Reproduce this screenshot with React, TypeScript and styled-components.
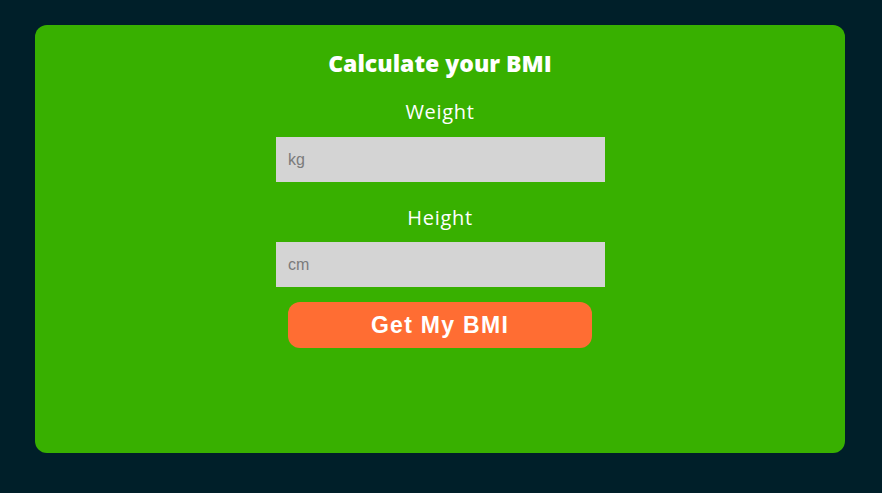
import React from "react";
import styled, { createGlobalStyle } from "styled-components";

const Global = createGlobalStyle`
  html, body { margin: 0; padding: 0; background: #001f29; }
  body { font-family: "Liberation Sans", Arial, sans-serif; }
`;

const Page = styled.div`
  width: 882px;
  height: 493px;
  box-sizing: border-box;
  padding: 25px 37px 40px 35px;
  background: #001f29;
`;

const Card = styled.div`
  height: 428px;
  box-sizing: border-box;
  background: #38b000;
  border-radius: 12px;
  padding-top: 23px;
  display: flex;
  flex-direction: column;
  align-items: center;
`;

const Title = styled.h1`
  margin: 0;
  font-family: "Open Sans", "Noto Sans", sans-serif;
  font-weight: 800;
  font-size: 23px;
  line-height: 30px;
  color: #ffffff;
`;

const Label = styled.label<{ $top: number }>`
  margin-top: ${(p) => p.$top}px;
  font-family: "Open Sans", "Noto Sans", sans-serif;
  font-size: 20px;
  letter-spacing: 0.7px;
  line-height: 28px;
  color: #ffffff;
`;

const Input = styled.input<{ $top: number }>`
  margin-top: ${(p) => p.$top}px;
  width: 329px;
  height: 45px;
  box-sizing: border-box;
  border: none;
  background: #d4d4d4;
  padding: 0 12px;
  font-family: "Liberation Sans", Arial, sans-serif;
  font-size: 16px;
  color: #333;
  outline: none;
  margin-left: 1px;
  &::placeholder { color: #7b7b7b; }
`;

const Button = styled.button`
  margin-top: 15px;
  width: 304px;
  height: 46px;
  border: none;
  border-radius: 12px;
  background: #ff6d33;
  color: #ffffff;
  font-family: "Liberation Sans", Arial, sans-serif;
  font-weight: 700;
  font-size: 23px;
  letter-spacing: 1.3px;
  cursor: pointer;
`;

export default function App() {
  return (
    <>
      <Global />
      <Page>
        <Card>
          <Title>Calculate your BMI</Title>
          <Label $top={20}>Weight</Label>
          <Input $top={11} placeholder="kg" />
          <Label $top={22}>Height</Label>
          <Input $top={10} placeholder="cm" />
          <Button>Get My BMI</Button>
        </Card>
      </Page>
    </>
  );
}
